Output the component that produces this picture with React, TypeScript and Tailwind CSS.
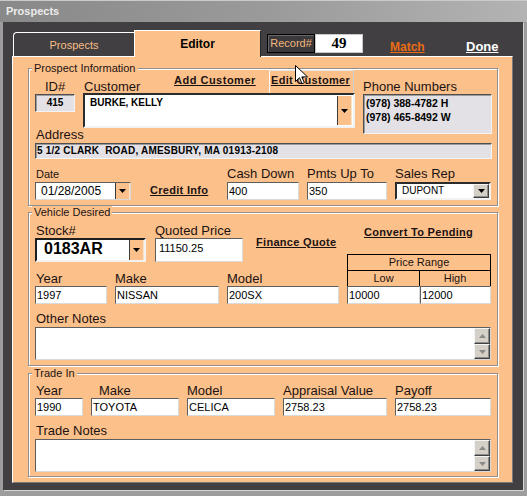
import React from "react"

const label = "text-[13px] leading-[15px] text-[#1c1212] whitespace-nowrap"

function Tri({ up, color = "#000" }: { up?: boolean; color?: string }) {
  return (
    <svg width="7" height="4" viewBox="0 0 7 4">
      <path d={up ? "M0 4h7L3.5 0z" : "M0 0h7L3.5 4z"} fill={color} />
    </svg>
  )
}

function Field({ value = "", className = "" }: { value?: string; className?: string }) {
  return (
    <div className={"h-[18px] bg-white border border-t-[#5e5e5e] border-l-[#5e5e5e] border-r-[#dadada] border-b-[#dadada] pl-[1px] text-[11px] leading-[16px] text-black whitespace-nowrap overflow-hidden " + className}>
      {value}
    </div>
  )
}

function Gray({ children, className = "" }: { children?: React.ReactNode; className?: string }) {
  return (
    <div className={"bg-[#e3e1e5] border border-t-[#4e4e4e] border-l-[#4e4e4e] border-r-[#f4f4f4] border-b-[#f4f4f4] shadow-[inset_1px_1px_0_#9c9c9c] font-bold text-black whitespace-nowrap overflow-hidden " + className}>
      {children}
    </div>
  )
}

function Link({ children, className = "" }: { children: React.ReactNode; className?: string }) {
  return (
    <div className={"text-[11px] leading-[13px] font-bold tracking-[0.3px] underline decoration-1 underline-offset-[1px] text-[#1c1212] whitespace-nowrap " + className}>
      {children}
    </div>
  )
}

function OrangeBtn() {
  return (
    <div className="w-[15px] self-stretch bg-[#fcc18a] border-l border-l-[#3a3a3a] border-r border-r-[#fbe3c8] flex items-center justify-center">
      <Tri />
    </div>
  )
}

function WinBtn({ up, dim, className = "" }: { up?: boolean; dim?: boolean; className?: string }) {
  return (
    <div className={"bg-[#d4d0c8] border border-t-[#f4f4f4] border-l-[#f4f4f4] border-r-[#404040] border-b-[#404040] shadow-[inset_-1px_-1px_0_#8c8c8c] flex items-center justify-center " + className}>
      <Tri up={up} color={dim ? "#8a8a8a" : "#000"} />
    </div>
  )
}

function Notes({ className = "" }: { className?: string }) {
  return (
    <div className={"ml-[6px] w-[456px] h-[33px] bg-white border border-t-[#5e5e5e] border-l-[#5e5e5e] border-r-[#dadada] border-b-[#dadada] flex justify-end " + className}>
      <div className="w-[16px] flex flex-col">
        <WinBtn up dim className="h-[16px]" />
        <WinBtn dim className="flex-1" />
      </div>
    </div>
  )
}

function Group({ title, className = "", children }: { title: string; className?: string; children: React.ReactNode }) {
  return (
    <div className={"relative ml-[15px] w-[470px] border border-[#8f8f8f] shadow-[inset_1px_1px_0_#fff,1px_1px_0_#fff] " + className}>
      <div className="absolute left-[3px] -top-[7px] bg-[#fcc18a] px-[2px] text-[11px] leading-[13px] text-[#1c1212] whitespace-nowrap">
        {title}
      </div>
      {children}
    </div>
  )
}

function Col({ title, value, className = "", labelClass = "" }: { title: string; value: string; className?: string; labelClass?: string }) {
  return (
    <div className={className}>
      <div className={label + " " + labelClass}>{title}</div>
      <Field value={value} />
    </div>
  )
}

function Cursor() {
  return (
    <svg className="absolute left-[295px] top-[65px]" width="13" height="20" viewBox="0 0 13 20">
      <path d="M0.5 0.5v16l4-3.8 2.6 6 2.3-1-2.6-5.8h5.7z" fill="#fff" stroke="#000" strokeWidth="1" />
    </svg>
  )
}

export default function App() {
  return (
    <div className="relative w-[527px] h-[496px] bg-[#9d9d9d] flex flex-col font-['Liberation_Sans',Arial,sans-serif] overflow-hidden">
      <div className="h-[22px] shrink-0 border-t border-[#cacaca] bg-gradient-to-r from-[#898989] via-[#9a9a9a] to-[#b3b3b3] pl-[6px] flex items-center">
        <span className="text-[11px] leading-[13px] font-bold text-[#ececec]">Prospects</span>
      </div>

      <div className="ml-[3px] w-[520px] h-[468px] bg-[#413f42] shadow-[1px_1px_0_#d6d6d6]">
        <div className="h-[34px] flex items-end">
          <div className="ml-[10px] w-[121px] h-[24px] border-t border-l border-white rounded-tl-[4px] flex items-center justify-center pt-[2px]">
            <span className="text-[11px] leading-[13px] text-[#f7bd84]">Prospects</span>
          </div>
          <div className="relative z-10 -mb-px w-[127px] h-[27px] bg-[#fcc18a] border-t border-l border-white border-r border-r-[#262626] flex justify-center pt-[6px]">
            <span className="text-[12px] leading-[14px] font-bold text-black">Editor</span>
          </div>
          <div className="self-start mt-[12px] ml-[6px] flex">
            <div className="w-[48px] h-[19px] bg-[#3b393c] border border-black shadow-[inset_1px_1px_0_#6a686b] flex items-center justify-center">
              <span className="text-[11px] leading-[13px] text-[#f3b67b]">Record#</span>
            </div>
            <div className="w-[48px] h-[19px] bg-white border border-[#c9c9c9] flex items-center justify-center">
              <span className="font-['Liberation_Serif',serif] text-[15px] leading-[17px] font-bold text-black">49</span>
            </div>
          </div>
          <div className="self-start mt-[12px] ml-[27px] w-[76px]">
            <span className="text-[12px] leading-[14px] font-bold underline decoration-1 underline-offset-[1px] text-[#ea6c14]">Match</span>
          </div>
          <div className="self-start mt-[12px]">
            <span className="text-[13px] leading-[15px] font-bold underline decoration-1 underline-offset-[1px] text-white">Done</span>
          </div>
        </div>

        <div className="ml-[9px] w-[501px] h-[427px] bg-[#fcc18a] border-t border-l border-white border-r border-b border-r-[#7a7a7a] border-b-[#7a7a7a] pt-[11px]">
          <Group title="Prospect Information" className="h-[138px]">
            <div className="pl-[6px] flex">
              <div className="w-[322px]">
                <div className="flex">
                  <div className="w-[40px] pt-[10px] flex flex-col items-center">
                    <div className={label}>ID#</div>
                    <Gray className="w-[40px] h-[18px] text-[10px] leading-[16px] text-center">415</Gray>
                  </div>
                  <div className="ml-[8px] w-[272px]">
                    <div className="flex h-[24px] items-start">
                      <div className={label + " pt-[10px] pl-[1px] w-[91px]"}>Customer</div>
                      <Link className="pt-[5px] tracking-[0.5px]">Add Customer</Link>
                      <div className="ml-auto mr-[1px] mt-[1px] w-[85px] h-[23px] border border-b-0 border-t-[#e6e6e6] border-l-[#fafafa] border-r-[#cfcfcf] pt-[3px] pl-[1px]">
                        <Link>Edit Customer</Link>
                      </div>
                    </div>
                    <div className="h-[35px] bg-white border-2 border-t-[#2c2c2c] border-l-[#2c2c2c] border-r-[#f2f2f2] border-b-[#f2f2f2] flex">
                      <div className="flex-1 pl-[5px] pt-[2px] text-[10px] leading-[12px] font-bold text-black">BURKE, KELLY</div>
                      <div className="my-px mr-px flex">
                        <OrangeBtn />
                      </div>
                    </div>
                  </div>
                </div>
                <div className={label + " -mt-px pl-[1px]"}>Address</div>
              </div>
              <div className="ml-[6px] w-[129px] pt-[10px]">
                <div className={label}>Phone Numbers</div>
                <Gray className="h-[40px] pl-[2px] pt-[1px] text-[10.5px] leading-[14px]">
                  <div>(978) 388-4782 H</div>
                  <div>(978) 465-8492 W</div>
                </Gray>
              </div>
            </div>
            <Gray className="ml-[6px] mt-[1px] w-[457px] h-[16px] pl-[1px] text-[10px] leading-[14px] tracking-[0.2px]">
              5 1/2 CLARK&nbsp; ROAD, AMESBURY, MA 01913-2108
            </Gray>
            <div className="pl-[6px] mt-[7px] flex">
              <div className="w-[96px]">
                <div className="h-[16px] text-[11px] leading-[16px] text-[#1c1212] pl-px">Date</div>
                <div className="h-[18px] bg-white border border-t-[#5e5e5e] border-l-[#5e5e5e] border-r-[#dadada] border-b-[#dadada] flex">
                  <div className="flex-1 pl-[5px] text-[12px] leading-[16px] text-black">01/28/2005</div>
                  <OrangeBtn />
                </div>
              </div>
              <div className="w-[96px] pl-[19px] pt-[18px]">
                <Link>Credit Info</Link>
              </div>
              <Col title="Cash Down" value="400" className="w-[72px]" labelClass="h-[16px]" />
              <Col title="Pmts Up To" value="350" className="ml-[8px] w-[80px]" labelClass="h-[16px]" />
              <div className="ml-[8px] w-[96px]">
                <div className={label + " h-[16px]"}>Sales Rep</div>
                <div className="h-[18px] bg-white border-2 border-t-[#2c2c2c] border-l-[#2c2c2c] border-r-[#f2f2f2] border-b-[#f2f2f2] flex">
                  <div className="flex-1 pl-[5px] text-[10px] leading-[14px] text-black">DUPONT</div>
                  <WinBtn className="w-[16px]" />
                </div>
              </div>
            </div>
          </Group>

          <Group title="Vehicle Desired" className="mt-[6px] h-[154px]">
            <div className="pl-[6px] flex">
              <div className="w-[304px]">
                <div className="flex pt-[10px]">
                  <div className="w-[111px]">
                    <div className={label + " pl-px"}>Stock#</div>
                    <div className="h-[24px] bg-white border-2 border-t-[#1e1e1e] border-l-[#1e1e1e] border-r-[#f2f2f2] border-b-[#f2f2f2] flex">
                      <div className="flex-1 pl-[7px] text-[16px] leading-[18px] font-bold text-black">0183AR</div>
                      <OrangeBtn />
                    </div>
                  </div>
                  <div className="ml-[9px] w-[88px]">
                    <div className={label}>Quoted Price</div>
                    <Field value="11150.25" className="h-[24px] border-t-[#3a3a3a] border-l-[#3a3a3a] pl-[3px] pt-[1px]" />
                  </div>
                  <Link className="ml-[13px] pt-[13px]">Finance Quote</Link>
                </div>
                <div className="flex mt-[9px]">
                  <Col title="Year" value="1997" className="w-[72px]" labelClass="pl-px" />
                  <Col title="Make" value="NISSAN" className="ml-[8px] w-[104px]" />
                  <Col title="Model" value="200SX" className="ml-[8px] w-[112px]" />
                </div>
              </div>
              <div className="ml-[8px] w-[144px]">
                <Link className="mt-[13px] pl-[17px]">Convert To Pending</Link>
                <div className="mt-[15px] border border-b-0 border-black text-[11px] leading-[15px] text-[#1c1212]">
                  <div className="h-[16px] border-b border-black text-center">Price Range</div>
                  <div className="h-[15px] flex">
                    <div className="w-[72px] border-r border-black text-center">Low</div>
                    <div className="flex-1 text-center">High</div>
                  </div>
                </div>
                <div className="flex">
                  <Field value="10000" className="w-[73px] border-t-[#2c2c2c] border-l-[#2c2c2c]" />
                  <Field value="12000" className="w-[71px] border-t-[#2c2c2c] border-l-[#2c2c2c]" />
                </div>
              </div>
            </div>
            <div className={label + " pl-[7px] mt-[7px]"}>Other Notes</div>
            <Notes className="mt-[1px]" />
          </Group>

          <Group title="Trade In" className="mt-[7px] h-[104px]">
            <div className="pl-[6px] pt-[9px] flex gap-[8px]">
              <Col title="Year" value="1990" className="w-[48px]" labelClass="pl-px" />
              <Col title="Make" value="TOYOTA" className="w-[88px]" labelClass="pl-[8px]" />
              <Col title="Model" value="CELICA" className="w-[88px]" />
              <Col title="Appraisal Value" value="2758.23" className="w-[104px]" />
              <Col title="Payoff" value="2758.23" className="w-[96px]" />
            </div>
            <div className={label + " pl-[7px] mt-[7px]"}>Trade Notes</div>
            <Notes className="mt-[1px]" />
          </Group>
        </div>
      </div>
      <Cursor />
    </div>
  )
}
